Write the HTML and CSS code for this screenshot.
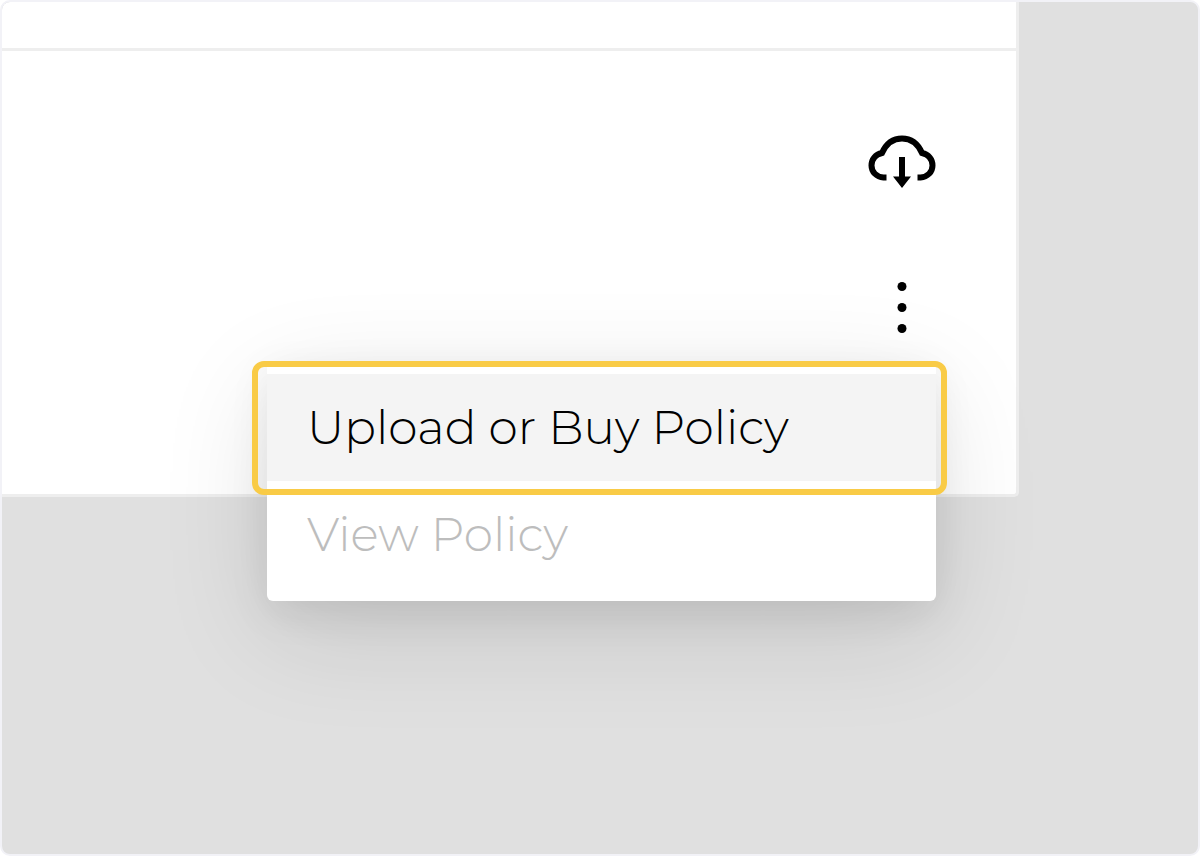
FILE: index.html
```html
<!DOCTYPE html>
<html lang="en">
<head>
    <meta charset="UTF-8">
    <meta name="viewport" content="width=device-width, initial-scale=1.0">
    <title>Policy</title>
    <link rel="stylesheet" href="styles.css">
</head>
<body>
    <main class="page">
        <section class="card">
            <div class="card-header"></div>
            <div class="card-body">
                <button class="icon-button" type="button" aria-label="Download">
                    <svg width="68" height="54" viewBox="0 0 68 54" fill="none">
                        <path d="M18.500 42.500h-3C8.500 42 3.500 37 3.500 30.500c0-6.500 4-11 10.500-12.500C18 9 25 3.500 34 3.500S50 9 54 18c6.500 1.500 10.500 6 10.500 12.500 0 6.500-5 11.500-12 12h-3" stroke="#000" stroke-width="6"/>
                        <path d="M31 22h6v19.500h6L34 53l-9-11.500h6z" fill="#000"/>
                    </svg>
                </button>
                <div class="actions">
                    <button class="icon-button" type="button" aria-label="More actions">
                        <svg width="68" height="52" viewBox="0 0 68 52">
                            <circle cx="34" cy="5.500" r="4.500"/>
                            <circle cx="34" cy="26.500" r="4.500"/>
                            <circle cx="34" cy="47.500" r="4.500"/>
                        </svg>
                    </button>
                    <div class="menu">
                        <button class="menu-item active" type="button">Upload or Buy Policy</button>
                        <button class="menu-item" type="button" disabled>View Policy</button>
                        <div class="highlight"></div>
                    </div>
                </div>
            </div>
        </section>
    </main>
</body>
</html>
```

FILE: styles.css
```css
* {
    box-sizing: border-box;
}

body {
    margin: 0;
    font-family: Montserrat, Inter, sans-serif;
    background-color: #fff;
}

.page {
    min-height: 100vh;
    padding-right: 179px;
    border: 2px solid #f2f2f7;
    border-radius: 10px;
    background-color: #e0e0e0;
    overflow: hidden;
}

.card {
    background-color: #fff;
    border: solid #eee;
    border-width: 0 3px 3px 0;
    border-radius: 8px 0 5px 0;
}

.card-header {
    height: 49px;
    border-bottom: 3px solid #eee;
}

.card-body {
    display: flex;
    flex-direction: column;
    align-items: flex-end;
    gap: 92px;
    padding: 84px 80px 161px 40px;
}

.icon-button {
    display: block;
    padding: 0;
    border: none;
    background: none;
    cursor: pointer;
}

.icon-button svg {
    display: block;
}

.actions {
    position: relative;
}

.menu {
    position: absolute;
    top: 80px;
    right: 0;
    width: 669px;
    padding: 13px 0;
    border-radius: 6px;
    background-color: #fff;
    box-shadow: 0 30px 110px rgba(0, 0, 0, 0.12), 0 12px 40px rgba(0, 0, 0, 0.08);
}

.menu-item {
    display: block;
    width: 100%;
    height: 107px;
    padding: 0 40px;
    border: none;
    background: none;
    color: #000;
    font-family: inherit;
    font-size: 47px;
    font-weight: 350;
    text-align: left;
    white-space: nowrap;
    cursor: pointer;
}

.menu-item.active {
    background-color: #f4f4f4;
}

.menu-item:disabled {
    color: #bdbdbd;
    cursor: default;
}

/* frame around the first menu item */
.highlight {
    position: absolute;
    top: 0;
    left: -15px;
    right: -11px;
    height: 134px;
    border: 6px solid #f9cb46;
    border-radius: 12px;
    pointer-events: none;
}
```
